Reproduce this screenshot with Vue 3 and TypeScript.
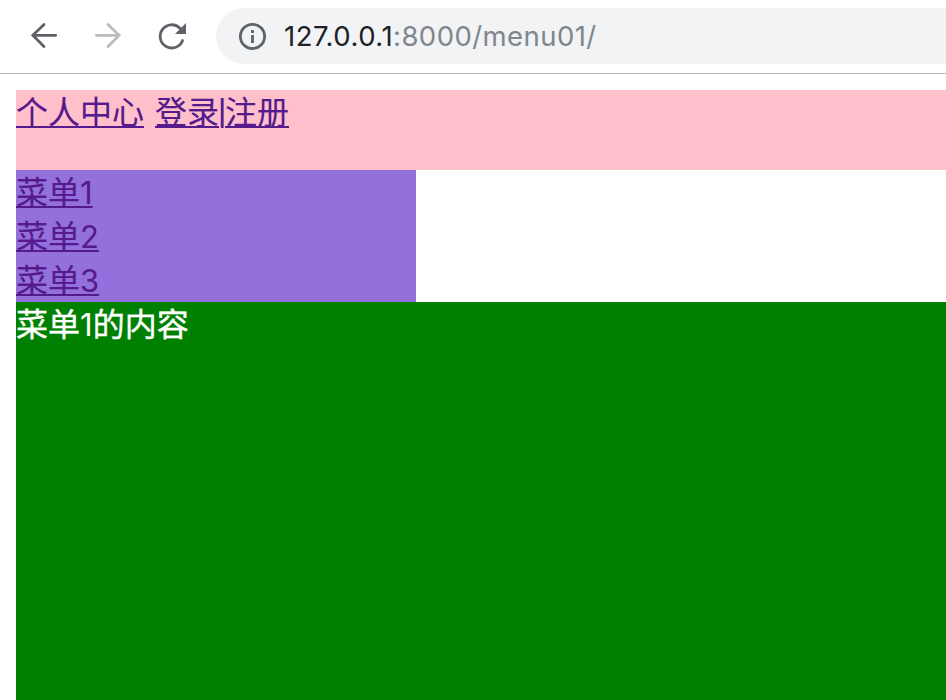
<script setup lang="ts">
const menus: number[] = [1, 2, 3]
</script>

<template>
  <div class="window">
    <header class="toolbar">
      <svg class="nav" viewBox="0 0 32 32"><path d="M27.7 15.3H5M16 4.4 4.8 15.3 16 26.6" /></svg>
      <svg class="nav disabled" viewBox="0 0 32 32"><path d="M4.3 15.3H27M16 4.4 27.2 15.3 16 26.6" /></svg>
      <svg class="nav" viewBox="0 0 32 32"><path d="M24 8.2A11.6 11.6 0 1 0 26.6 20.5" /><path class="solid" d="M30 3v11H19z" /></svg>
      <div class="address">
        <svg class="info" viewBox="0 0 28 28"><circle cx="14.5" cy="14.4" r="12.1" /><path d="M14.5 13v8M14.5 8v3" /></svg>
        <span class="url"><span class="host">127.0.0.1</span><span class="path">:8000/menu01/</span></span>
      </div>
    </header>
    <main class="page">
      <nav class="top"><a href="#">个人中心</a><a href="#" class="auth">登录<span class="bar">|</span>注册</a></nav>
      <nav class="side"><a v-for="n in menus" :key="n" href="#">菜单<span class="digit">{{ n }}</span></a></nav>
      <section class="content">菜单<span class="digit">1</span>的内容</section>
    </main>
  </div>
</template>

<style>
body { margin: 0; overflow: hidden; background: #fff; }
</style>

<style scoped>
.window { height: 700px; display: flex; flex-direction: column; overflow: hidden; }
.toolbar { box-sizing: border-box; height: 74px; flex: none; display: flex; align-items: flex-start; padding: 8px 0 0 28px; border-bottom: 1px solid #b5b7ba; }
.nav { width: 32px; height: 32px; margin: 12px 32px 0 0; fill: none; stroke: #5f6368; stroke-width: 2.8; stroke-linecap: round; }
.nav + .nav + .nav { margin-right: 28px; }
.disabled { stroke: #babcbe; }
.nav .solid { fill: #5f6368; stroke: none; }
.address { flex: 1; height: 56px; display: flex; align-items: center; padding-left: 22px; border-radius: 28px 0 0 28px; background: #f1f3f4; }
.info { width: 28px; height: 28px; overflow: visible; fill: none; stroke: #5f6368; stroke-width: 2.8; }
.url { padding-bottom: 1px; margin-left: 18px; font: 27.5px/36px Inter, sans-serif; color: #80868b; white-space: nowrap; }
.host { color: #202124; letter-spacing: 0.5px; }
.path { letter-spacing: 0.43px; }
.page { flex: 1; display: flex; flex-direction: column; padding: 16px 0 0 16px; font: 32px/44px "Liberation Sans", "Noto Sans CJK SC", sans-serif; }
a { color: #551a8b; text-decoration: underline; text-decoration-thickness: 2px; text-decoration-skip-ink: none; text-underline-offset: 2px; -webkit-text-stroke: 0.15px currentColor; }
.top, .side, .content { box-sizing: border-box; padding-top: 1px; }
.top { height: 80px; background: #ffc0cb; }
.auth { margin-left: 11px; }
.bar { display: inline-flex; justify-content: center; width: 6px; line-height: 1; vertical-align: 3px; }
.digit { font-family: Inter, sans-serif; font-size: 31px; line-height: 1; -webkit-text-stroke: 0; }
.side { width: 400px; height: 132px; display: flex; flex-direction: column; align-items: flex-start; background: #9370db; }
.side a { height: 44px; }
.content { flex: 1; color: #fff; background: #008000; -webkit-text-stroke: 0.4px currentColor; }
</style>
